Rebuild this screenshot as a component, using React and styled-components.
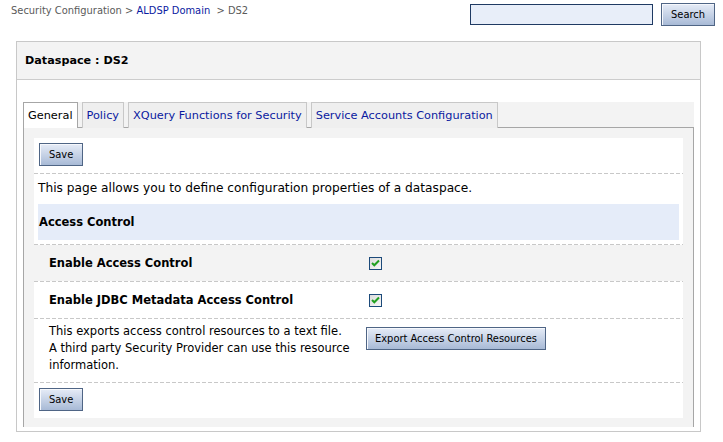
import React from "react";
import styled, { createGlobalStyle } from "styled-components";

const GlobalStyle = createGlobalStyle`
  body {
    margin: 0;
    background: #fff;
    font-family: "DejaVu Sans Condensed", "DejaVu Sans", Tahoma, sans-serif;
    font-size: 11px;
    color: #000;
  }
`;

const wide = `"DejaVu Sans", Tahoma, Verdana, sans-serif`;

const TopBar = styled.div`
  height: 41px;
  box-sizing: border-box;
  display: flex;
  justify-content: space-between;
  align-items: flex-start;
  padding: 3px 8px 0 11px;
`;

const Crumbs = styled.div`
  padding-top: 1px;
  color: #5a5a5a;
  a {
    color: #0a1aa0;
    text-decoration: none;
  }
`;

const SearchForm = styled.div`
  display: flex;
  gap: 8px;
`;

const SearchInput = styled.input`
  width: 183px;
  height: 21px;
  box-sizing: border-box;
  margin-top: 1px;
  border: 1px solid #1f3a63;
  background: #e8eef9;
`;

const Button = styled.button`
  font-family: inherit;
  font-size: 11px;
  color: #000;
  height: 23px;
  padding: 0 ${(p) => p.pad || "8px"};
  border: 1px solid #4f6585;
  background: linear-gradient(#e6ecf7, #a8bad6);
  box-shadow: inset 1px 1px 0 #f6f8fc;
  cursor: pointer;
`;

const Panel = styled.div`
  margin-left: 16px;
  width: 685px;
  box-sizing: border-box;
  border: 1px solid #c8c8c8;
`;

const PanelHeader = styled.div`
  height: 37px;
  display: flex;
  align-items: center;
  padding-left: 8px;
  background: #f3f3f3;
  border-bottom: 1px solid #cccccc;
  font-family: ${wide};
  font-size: 11.2px;
  font-weight: bold;
`;

const PanelBody = styled.div`
  padding: 22px 6px 4px 6px;
`;

const TabStrip = styled.div`
  display: flex;
  gap: 4px;
  height: 26px;
  box-sizing: border-box;
  background: #f3f3f3;
  border-bottom: 1px solid #a6a6a6;
`;

const Tab = styled.div`
  height: 26px;
  box-sizing: border-box;
  display: flex;
  align-items: center;
  padding: 0 4px;
  border: 1px solid ${(p) => (p.active ? "#a6a6a6" : "#c8c8c8")};
  border-bottom: none;
  background: ${(p) => (p.active ? "#fff" : "#efefef")};
  color: ${(p) => (p.active ? "#000" : "#0a1aa0")};
  font-family: ${wide};
  font-size: 11.3px;
`;

const TabContent = styled.div`
  background: #f3f3f3;
  border-left: 1px solid #a6a6a6;
  border-right: 1px solid #a6a6a6;
  padding: 10px 10px 9px 10px;
`;

const Sheet = styled.div`
  background: #fff;
`;

const Rule = styled.div`
  height: 1px;
  background: repeating-linear-gradient(to right, #c8c8c8 0 4px, transparent 4px 6px);
`;

const ButtonRow = styled.div`
  padding: 5px 5px 7px 5px;
`;

const Description = styled.div`
  height: 30px;
  display: flex;
  align-items: center;
  padding: 0 4px 2px 4px;
  box-sizing: border-box;
  font-family: ${wide};
  font-size: 12.2px;
`;

const SectionHead = styled.div`
  margin: 0 4px 4px 4px;
  height: 36px;
  display: flex;
  align-items: center;
  padding-left: 1px;
  background: #e5ecf9;
  font-family: ${wide};
  font-size: 11.5px;
  font-weight: bold;
`;

const Row = styled.div`
  display: grid;
  grid-template-columns: 332px 1fr;
  align-items: ${(p) => (p.top ? "start" : "center")};
  min-height: 36px;
  background: ${(p) => (p.shade ? "#f3f3f3" : "#fff")};
`;

const Label = styled.div`
  padding-left: 15px;
  font-family: ${wide};
  font-size: 11.5px;
  font-weight: bold;
`;

const Note = styled.div`
  padding: 4px 0 8px 15px;
  line-height: 17px;
  white-space: nowrap;
  font-family: ${wide};
  font-size: 11.5px;
`;

const Box = styled.span`
  display: inline-flex;
  align-items: center;
  justify-content: center;
  margin-left: 3px;
  width: 13px;
  height: 13px;
  box-sizing: border-box;
  border: 1px solid #1c4a7a;
  background: linear-gradient(135deg, #dcdcdc, #f7f7f7);
`;

const Cell = styled.div`
  display: flex;
  padding-top: ${(p) => p.pt || "0"};
`;

const Check = () => (
  <Box>
    <svg width="9" height="8" viewBox="0 0 9 8">
      <path d="M1 4 L3.3 6.3 L8 1.5" fill="none" stroke="#21a020" strokeWidth="2" />
    </svg>
  </Box>
);

export default function App() {
  return (
    <>
      <GlobalStyle />
      <TopBar>
        <Crumbs>
          Security Configuration &gt; <a href="#">ALDSP Domain</a>&nbsp; &gt; DS2
        </Crumbs>
        <SearchForm>
          <SearchInput />
          <Button pad="9px">Search</Button>
        </SearchForm>
      </TopBar>
      <Panel>
        <PanelHeader>Dataspace : DS2</PanelHeader>
        <PanelBody>
          <TabStrip>
            <Tab active>General</Tab>
            <Tab>Policy</Tab>
            <Tab>XQuery Functions for Security</Tab>
            <Tab>Service Accounts Configuration</Tab>
          </TabStrip>
          <TabContent>
            <Sheet>
              <ButtonRow>
                <Button pad="9px">Save</Button>
              </ButtonRow>
              <Rule />
              <Description>This page allows you to define configuration properties of a dataspace.</Description>
              <SectionHead>Access Control</SectionHead>
              <Rule />
              <Row shade>
                <Label>Enable Access Control</Label>
                <Cell><Check /></Cell>
              </Row>
              <Rule />
              <Row>
                <Label>Enable JDBC Metadata Access Control</Label>
                <Cell><Check /></Cell>
              </Row>
              <Rule />
              <Row top>
                <Note>
                  This exports access control resources to a text file.<br />
                  A third party Security Provider can use this resource<br />
                  information.
                </Note>
                <Cell pt="8px">
                  <Button>Export Access Control Resources</Button>
                </Cell>
              </Row>
              <Rule />
              <ButtonRow>
                <Button pad="9px">Save</Button>
              </ButtonRow>
            </Sheet>
          </TabContent>
        </PanelBody>
      </Panel>
    </>
  );
}
